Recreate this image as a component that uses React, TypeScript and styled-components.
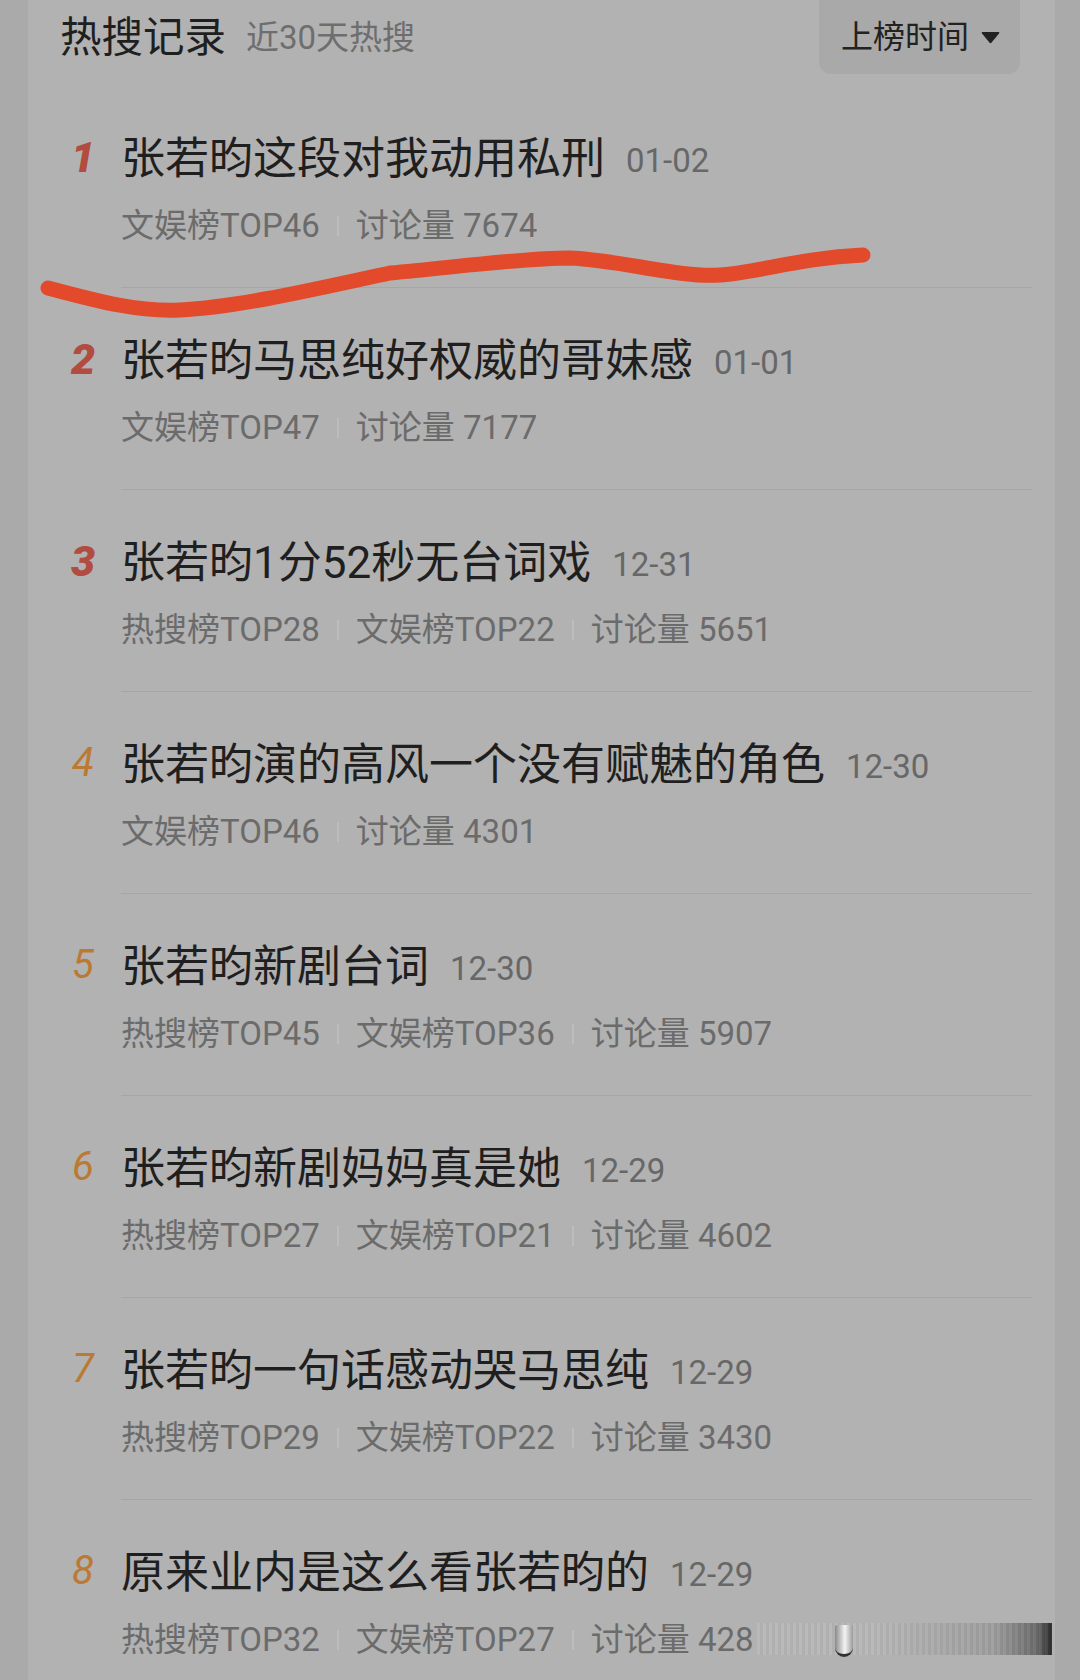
import React from "react";
import styled, { createGlobalStyle } from "styled-components";

const GlobalStyle = createGlobalStyle`
  html, body {
    margin: 0;
    padding: 0;
    overflow: hidden;
    background: #aaaaaa;
  }
  body {
    font-family: Roboto, "Noto Sans CJK SC", sans-serif;
  }
`;

const Screen = styled.div`
  position: relative;
  width: 1080px;
  height: 1680px;
  overflow: hidden;
  background: #aaaaaa;
  display: flex;
`;

const Panel = styled.main`
  margin-left: 28px;
  width: 1027px;
  box-sizing: border-box;
  padding: 0 23px 0 32px;
  background: #b2b2b2;
`;

const Header = styled.header`
  display: flex;
  justify-content: space-between;
  align-items: flex-start;
  height: 74px;
  padding-right: 12px;
`;

const HeadingGroup = styled.div`
  display: flex;
  align-items: center;
  height: 74px;
  box-sizing: border-box;
  padding-top: 2px;
`;

const Heading = styled.h1`
  margin: 0;
  font-size: 41.5px;
  line-height: 48px;
  font-weight: 400;
  color: #1f1f1f;
`;

const Subheading = styled.span`
  margin-left: 20px;
  font-size: 33px;
  line-height: 38px;
  color: #6e6e6e;
`;

const SortButton = styled.button`
  margin-top: -12px;
  height: 86px;
  box-sizing: border-box;
  padding: 12px 20px 0 22px;
  border: 0;
  border-radius: 12px;
  background: #a9a9a9;
  display: flex;
  align-items: center;
  gap: 12px;
  font-family: inherit;
  font-size: 32px;
  line-height: 38px;
  color: #222;
`;

const List = styled.ol`
  list-style: none;
  margin: 12px 0 0;
  padding: 0;
`;

const Row = styled.li`
  display: flex;
  align-items: flex-start;
`;

const Rank = styled.div<{ $top: boolean }>`
  width: 46px;
  height: 52px;
  margin: 47px 15px 0 0;
  box-sizing: border-box;
  padding-bottom: 4px;
  display: flex;
  align-items: center;
  justify-content: center;
  font-family: Roboto, "Liberation Sans", sans-serif;
  font-style: italic;
  font-weight: ${(p) => (p.$top ? 900 : 400)};
  font-size: ${(p) => (p.$top ? 43 : 40)}px;
  line-height: 1;
  color: ${(p) => (p.$top ? "#b24b40" : "#bb7a33")};
`;

const Body = styled.div`
  flex: 1;
  padding: 47px 0 42px;
  border-bottom: 1px solid #a6a6a6;
`;

const TitleLine = styled.div`
  display: flex;
  align-items: flex-start;
  height: 52px;
`;

const Title = styled.span`
  font-size: 44px;
  line-height: 52px;
  color: #1f1f1f;
`;

const DateText = styled.span`
  margin-left: 21px;
  padding-top: 9px;
  font-size: 33px;
  line-height: 38px;
  color: #676767;
`;

const Meta = styled.div`
  display: flex;
  align-items: center;
  margin-top: 22px;
  height: 38px;
  font-size: 33px;
  line-height: 38px;
  color: #6b6b6b;
  white-space: pre;
`;

const Divider = styled.span`
  width: 2px;
  height: 20px;
  margin: 0 17px;
  background: #bdbdbd;
`;

const Scribble = styled.svg`
  position: absolute;
  left: 0;
  top: 0;
  pointer-events: none;
`;

const GlitchBar = styled.div`
  position: absolute;
  left: 757px;
  top: 1623px;
  width: 295px;
  height: 32px;
  background: repeating-linear-gradient(
      to right,
      rgba(255, 255, 255, 0.05) 0px,
      rgba(255, 255, 255, 0.05) 3px,
      rgba(0, 0, 0, 0.03) 3px,
      rgba(0, 0, 0, 0.03) 6px
    ),
    linear-gradient(
      to right,
      rgba(190, 190, 190, 0.3) 0%,
      rgba(185, 185, 185, 0.5) 40%,
      rgba(150, 150, 150, 0.75) 80%,
      #6a6a6a 95%,
      #2a2a2a 100%
    );
`;

const GlitchKnob = styled.div`
  position: absolute;
  left: 78px;
  top: 2px;
  width: 18px;
  height: 32px;
  border-radius: 2px 2px 9px 9px;
  background: linear-gradient(to right, #8a8a8a, #f4f4f4 55%, #9a9a9a);
  border-bottom: 3px solid #333;
  box-sizing: border-box;
`;

type Item = {
  title: string;
  date: string;
  meta: string[];
};

const items: Item[] = [
  { title: "张若昀这段对我动用私刑", date: "01-02", meta: ["文娱榜TOP46", "讨论量 7674"] },
  { title: "张若昀马思纯好权威的哥妹感", date: "01-01", meta: ["文娱榜TOP47", "讨论量 7177"] },
  { title: "张若昀1分52秒无台词戏", date: "12-31", meta: ["热搜榜TOP28", "文娱榜TOP22", "讨论量 5651"] },
  { title: "张若昀演的高风一个没有赋魅的角色", date: "12-30", meta: ["文娱榜TOP46", "讨论量 4301"] },
  { title: "张若昀新剧台词", date: "12-30", meta: ["热搜榜TOP45", "文娱榜TOP36", "讨论量 5907"] },
  { title: "张若昀新剧妈妈真是她", date: "12-29", meta: ["热搜榜TOP27", "文娱榜TOP21", "讨论量 4602"] },
  { title: "张若昀一句话感动哭马思纯", date: "12-29", meta: ["热搜榜TOP29", "文娱榜TOP22", "讨论量 3430"] },
  { title: "原来业内是这么看张若昀的", date: "12-29", meta: ["热搜榜TOP32", "文娱榜TOP27", "讨论量 428"] },
];

export default function App() {
  return (
    <>
      <GlobalStyle />
      <Screen>
        <Panel>
          <Header>
            <HeadingGroup>
              <Heading>热搜记录</Heading>
              <Subheading>近30天热搜</Subheading>
            </HeadingGroup>
            <SortButton>
              上榜时间
              <svg width="19" height="13" viewBox="0 0 19 13">
                <path d="M1.5 1 H17.5 Q19 1 18 2.4 L10.6 11.6 Q9.5 12.8 8.4 11.6 L1 2.4 Q0 1 1.5 1 Z" fill="#222" />
              </svg>
            </SortButton>
          </Header>
          <List>
            {items.map((it, i) => (
              <Row key={i}>
                <Rank $top={i < 3}>{i + 1}</Rank>
                <Body>
                  <TitleLine>
                    <Title>{it.title}</Title>
                    <DateText>{it.date}</DateText>
                  </TitleLine>
                  <Meta>
                    {it.meta.map((m, j) => (
                      <React.Fragment key={j}>
                        {j > 0 && <Divider />}
                        <span>{m}</span>
                      </React.Fragment>
                    ))}
                  </Meta>
                </Body>
              </Row>
            ))}
          </List>
        </Panel>
        <Scribble width="1080" height="340" viewBox="0 0 1080 340">
          <path
            d="M48 288 C100 302, 140 312, 180 310 C240 307, 320 288, 390 273 C450 268, 520 258, 570 258 C620 260, 680 278, 720 275 C760 272, 800 258, 863 255"
            stroke="#e24a2b"
            strokeWidth="15"
            fill="none"
            strokeLinecap="round"
          />
        </Scribble>
        <GlitchBar>
          <GlitchKnob />
        </GlitchBar>
      </Screen>
    </>
  );
}
